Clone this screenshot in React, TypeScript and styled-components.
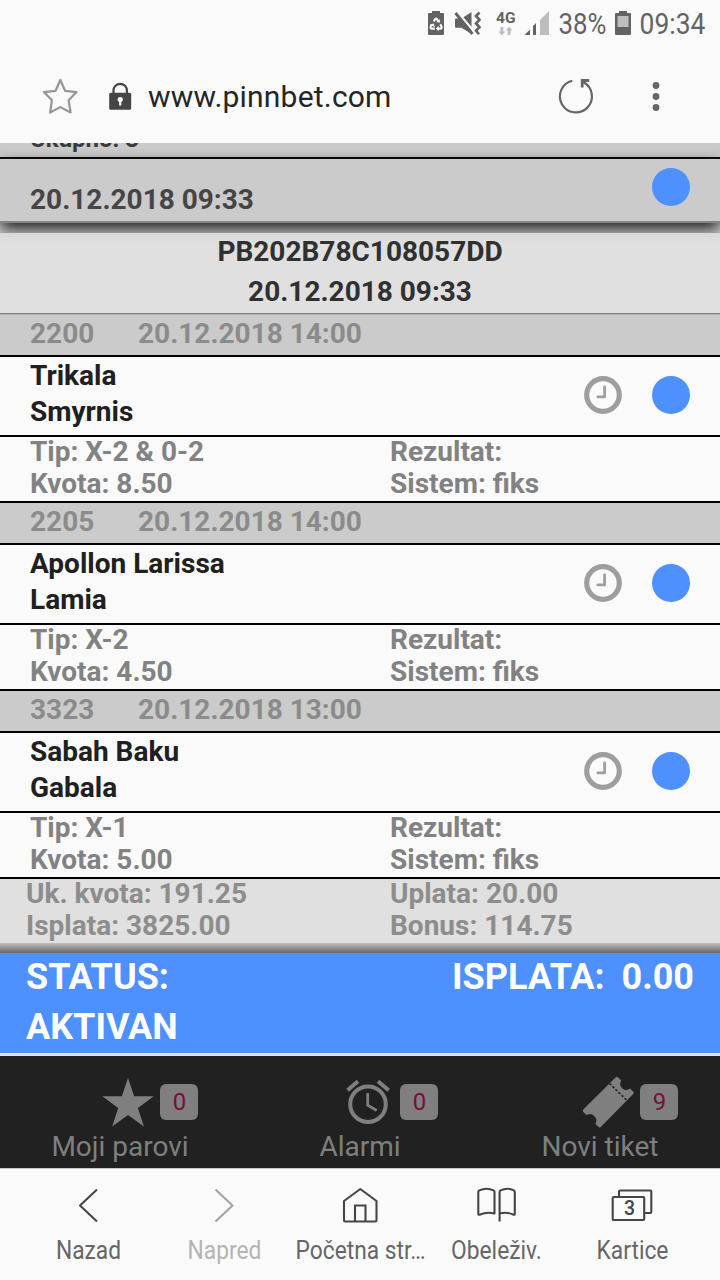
import React from "react";
import styled, { createGlobalStyle } from "styled-components";

const GlobalStyle = createGlobalStyle`
  * { box-sizing: border-box; }
  html, body { margin: 0; padding: 0; }
  body {
    width: 720px; height: 1280px; overflow: hidden; background: #fafafa;
    font-family: Roboto, "Liberation Sans", sans-serif; color: #212121;
  }
  svg { display: block; }
`;

const Screen = styled.div`
  width: 720px;
  height: 1280px;
  display: flex;
  flex-direction: column;
  overflow: hidden;
`;

const StatusBar = styled.header`
  height: 48px;
  flex: none;
  display: flex;
  align-items: flex-start;
  padding: 0 0 0 426px;
  color: #636363;
`;

const Condensed = styled.span<{ $scale: number; $w: number; $size: number; $lh: number }>`
  display: flex;
  justify-content: center;
  flex: none;
  width: ${(p) => p.$w}px;
  font-size: ${(p) => p.$size}px;
  line-height: ${(p) => p.$lh}px;
  white-space: nowrap;
  transform: scaleX(${(p) => p.$scale});
`;

const AddressBar = styled.div`
  height: 95px;
  flex: none;
  display: flex;
  align-items: center;
  padding: 0 36px 0 40px;
`;

const Url = styled.div`
  flex: 1;
  margin: 2px 0 0 16px;
  font-size: 30px;
  line-height: 40px;
  letter-spacing: 0.2px;
  color: #252525;
`;

const Page = styled.main`
  flex: none;
  height: 1025px;
  display: flex;
  flex-direction: column;
  background: #cbcbcb;
  overflow: hidden;
`;

const CountStrip = styled.div`
  flex: none;
  height: 14px;
  overflow: hidden;
  display: flex;
  align-items: flex-end;
  padding: 0 30px;
  font-weight: 700;
  font-size: 24px;
  line-height: 32px;
  color: #3a3a3a;
`;

const CountText = styled.span`
  margin-bottom: 2px;
`;

const TicketSummary = styled.section`
  flex: none;
  height: 66px;
  position: relative;
  display: flex;
  justify-content: space-between;
  padding: 9px 30px 0;
  border-top: 2px solid #0c0a0c;
  border-bottom: 2px solid #858585;
  background: #cbcbcb;
  box-shadow: 0 7px 14px -1px rgba(0, 0, 0, 0.85);
`;

const SummaryDate = styled.time`
  margin-top: 16px;
  font-weight: 700;
  font-size: 28px;
  line-height: 32px;
  color: #454545;
`;

const Dot = styled.div`
  flex: none;
  width: 38px;
  height: 38px;
  border-radius: 50%;
  background: #4d90fe;
`;

const TicketHead = styled.section`
  flex: none;
  position: relative;
  margin-top: 10px;
  height: 81px;
  border-bottom: 1px solid #7f7f7f;
  background: linear-gradient(#d9d9d9, #e0e0e0 10px);
  text-align: center;
  font-weight: 700;
  font-size: 28px;
  color: #303030;
`;

const TicketLine = styled.div`
  height: 40px;
  line-height: 38px;
`;

const MatchHeader = styled.div<{ $first?: boolean }>`
  flex: none;
  height: ${(p) => (p.$first ? 43 : 44)}px;
  display: flex;
  padding: 3px 30px 0;
  border-top: ${(p) => (p.$first ? "1px solid #b4b4b4" : "2px solid #000")};
  border-bottom: 2px solid #000;
  background: #cbcbcb;
  font-weight: 700;
  font-size: 28px;
  line-height: 32px;
  color: #8b8b8b;
`;

const MatchCode = styled.span`
  width: 108px;
`;

const Teams = styled.div`
  flex: none;
  height: 80px;
  display: flex;
  align-items: flex-start;
  padding: 0 30.4px 0 30px;
  border-bottom: 2px solid #000;
  background: #fafafa;
`;

const TeamNames = styled.div`
  flex: 1;
  padding-top: 1px;
  font-weight: 700;
  font-size: 28px;
  line-height: 36px;
  color: #202020;
`;

const Marks = styled.div`
  display: flex;
  gap: 30px;
  padding-top: 19px;
`;

const Details = styled.div<{ $total?: boolean }>`
  flex: none;
  height: 64px;
  display: grid;
  grid-template-columns: ${(p) => (p.$total ? 364 : 360)}px 1fr;
  grid-auto-rows: 32px;
  padding-left: ${(p) => (p.$total ? 26 : 30)}px;
  background: ${(p) => (p.$total ? "#e0e0e0" : "#fafafa")};
  font-weight: 700;
  font-size: 28px;
  line-height: 30px;
  color: ${(p) => (p.$total ? "#8d8d8d" : "#828282")};
`;

const Rule = styled.div`
  flex: none;
  height: 2px;
  background: #000;
`;

const BottomShade = styled.div`
  flex: none;
  height: 10px;
  background: linear-gradient(#bebebe, #666);
`;

const StatusPanel = styled.section`
  flex: none;
  height: 103px;
  display: flex;
  justify-content: space-between;
  padding: 0 26px;
  border-bottom: 3px solid #dde6f3;
  background: #4d90fe;
  color: #fff;
  font-weight: 700;
  font-size: 36px;
  line-height: 50px;
`;

const StatusLabel = styled.div`
  width: 200px;
  margin-top: -1px;
`;

const Payout = styled.div`
  display: flex;
  gap: 17px;
  margin-top: -1px;
`;

const SiteNav = styled.nav`
  flex: none;
  height: 112px;
  display: grid;
  grid-template-columns: repeat(3, 240px);
  background: #212121;
  color: #7f7f7f;
`;

const SiteTab = styled.div`
  display: flex;
  flex-direction: column;
  font-size: 28px;
  line-height: 32px;
  text-align: center;
`;

const TabTop = styled.div`
  height: 75px;
  display: flex;
  align-items: flex-start;
  padding: 18px 0 0 100px;
`;

const Count = styled.span`
  width: 38px;
  height: 36px;
  margin: 10px 0 0 4px;
  padding-left: 1px;
  border-radius: 6px;
  background: #7f7f7f;
  color: #7a0f35;
  font-size: 24px;
  line-height: 36px;
`;

const BrowserNav = styled.nav`
  flex: none;
  height: 112px;
  display: grid;
  grid-template-columns: repeat(5, 136px);
  padding: 0 20px;
  border-top: 1px solid #c8c8c8;
  background: #fafafa;
`;

const BrowserTab = styled.div<{ $off?: boolean }>`
  display: flex;
  flex-direction: column;
  align-items: center;
  padding-top: 12px;
  gap: 8px;
  color: ${(p) => (p.$off ? "#b4b4b4" : "#666")};
`;

const Clock = () => (
  <svg width="38" height="38" viewBox="0 0 38 38" fill="none" stroke="#9e9e9e">
    <circle cx="19" cy="19" r="16.3" strokeWidth="5.2" />
    <path d="M20.600 11v9.800h-6.800" strokeWidth="2.800" strokeLinecap="round" strokeLinejoin="round" />
  </svg>
);

const StatusIcons = () => (
  <svg width="128" height="48" viewBox="426 0 128 48" fill="#636363">
    <path d="M428 14q0-1 1-1h3v-2h8v2h3q1 0 1 1v20q0 1-1 1h-14q-1 0-1-1z" />
    <path d="M433.800 21.500l1.300-2.400q.900-1.200 1.800 0l1.300 2.400M440.300 24.300l1.300 2.400q.400 1.600-1 1.900h-3.200M434.800 28.600h-3.200q-1.400-.300-1-1.900l1.300-2.400" fill="none" stroke="#fafafa" strokeWidth="2.100" />
    <path d="M436.600 22.200l3.600.400-.600-3.600zM438.600 25.700v5.600l-2.600-2.800zM430.200 24.600l3.700-1 .900 3.600z" fill="#fafafa" />
    <path d="M455 19.500q0-1 1-1h5.500l10-6.500v22l-10-6.200h-5.500q-1 0-1-1z" />
    <path d="M457 11.500L474 31.500" stroke="#fafafa" strokeWidth="2.400" />
    <path d="M455.500 13L472.500 34" stroke="#636363" strokeWidth="2.800" />
    <path d="M479.500 12.500l-3.500 3.500 3.500 3.800-3.500 3.700 3.500 3.800-3.500 3.300 3 3.700" fill="none" stroke="#636363" strokeWidth="2.600" />
    <text x="496" y="23.200" fontSize="15.500" fontWeight="700" textLength="19.500" lengthAdjust="spacingAndGlyphs" fontFamily="Roboto, sans-serif">4G</text>
    <path d="M500.500 27h2.800v4.500h2l-3.400 3.800-3.400-3.800h2zM507.700 35h2.800v-4.500h2l-3.400-3.800-3.400 3.800h2z" fill="#bdbdbd" />
    <path d="M524.500 35l5.500-5.500v5.500zM533 35v-9l3-3v12z" />
    <path d="M540 35V20l9-9v24z" fill="#bdbdbd" />
  </svg>
);

const BatterySvg = styled.svg`
  flex: none;
  margin-left: 4px;
`;

const Battery = () => (
  <BatterySvg width="16" height="48" viewBox="0 0 16 48">
    <path d="M0 14q0-1 1-1h3v-2h8v2h3q1 0 1 1v20q0 1-1 1H1q-1 0-1-1z" fill="#636363" />
    <rect x="2.500" y="16" width="11" height="11" fill="#bdbdbd" />
  </BatterySvg>
);

const FavoriteStar = () => (
  <svg width="40" height="40" viewBox="0 0 40 40" fill="none" stroke="#969696" strokeWidth="2.200" strokeLinejoin="round">
    <path d="M20.300 4l4.800 10.800 11.500 1.300-8 8.200 2 12.200-10.300-5.400-10.200 5.400 1.800-12.200-8-8.200 11.700-1.300z" />
  </svg>
);

const LockSvg = styled.svg`
  flex: none;
  margin-left: 28px;
`;

const Lock = () => (
  <LockSvg width="24" height="40" viewBox="0 0 24 40">
    <path d="M5.500 19V14.500a6.700 6.700 0 0 1 13.400 0V19" fill="none" stroke="#454545" strokeWidth="2.200" />
    <rect x="1.200" y="16.800" width="22" height="17" rx="1.500" fill="#454545" />
    <path d="M12.200 21a2.600 2.600 0 0 1 1.100 5v3.500h-2.200V26a2.600 2.600 0 0 1 1.100-5z" fill="#fafafa" />
  </LockSvg>
);

const Reload = () => (
  <svg width="40" height="40" viewBox="556 76 40 40" fill="none" stroke="#666" strokeWidth="2.200">
    <path d="M572.300 80.800A16 16 0 1 0 583.500 82.300" />
    <path d="M582.200 87.500v-7h7" strokeWidth="2.800" />
    <path d="M582 80l4 4" />
  </svg>
);

const More = () => (
  <svg width="88" height="40" viewBox="596 76 88 40" fill="#666">
    <circle cx="656" cy="85.500" r="3.400" />
    <circle cx="656" cy="96.500" r="3.400" />
    <circle cx="656" cy="107.500" r="3.400" />
  </svg>
);

const StarSolid = () => (
  <svg width="56" height="56" viewBox="0 0 56 56" fill="#7f7f7f">
    <path d="M28 4l6.100 18.300h19.700L37.900 34l6 18.400L28 41.100 12.200 52.400l6-18.400L2.300 22.300h19.600z" />
  </svg>
);

const Alarm = () => (
  <svg width="56" height="56" viewBox="0 0 56 56" fill="none" stroke="#7f7f7f">
    <circle cx="28" cy="30.200" r="17.800" strokeWidth="4" />
    <path d="M27.700 19v12.200l9 5.300" strokeWidth="2.800" />
    <path d="M7.600 16.200L18 7.200M38 7.200l10.600 9" strokeWidth="4" />
  </svg>
);

const TicketIcon = () => (
  <svg width="56" height="56" viewBox="0 0 56 56">
    <path
      d="M35.500 3.500q1.300-1.300 2.600 0l3.200 3a5.500 5.500 0 0 0 .700 7.500 5.500 5.500 0 0 0 8 .500l3.200 3q1.300 1.300 0 2.600L21 52.800q-1.300 1.300-2.600 0l-3.200-3a6 6 0 0 0-1-7.800 6 6 0 0 0-7.700-.900l-3.200-3q-1.300-1.300 0-2.600z"
      fill="#7f7f7f"
    />
    <path d="M29.500 9.500L46.500 26" stroke="#212121" strokeWidth="1.600" strokeDasharray="2.400 1.800" />
  </svg>
);

const lineIcon = { fill: "none", stroke: "#454545", strokeWidth: 2.1, strokeLinejoin: "round" as const };

const Back = () => (
  <svg width="48" height="48" viewBox="0 0 48 48" {...lineIcon}>
    <path d="M33 8.500L16 24.500l17 16" />
  </svg>
);

const Forward = () => (
  <svg width="48" height="48" viewBox="0 0 48 48" {...lineIcon} stroke="#a2a2a2">
    <path d="M15.500 8.500l17 16-17 16" />
  </svg>
);

const Home = () => (
  <svg width="48" height="48" viewBox="0 0 48 48" {...lineIcon}>
    <path d="M8 20L24.300 8 40.500 20v19.500q0 1-1 1H9q-1 0-1-1z" />
    <path d="M19 40V24.500h10.500V40" strokeLinejoin="miter" />
  </svg>
);

const Book = () => (
  <svg width="48" height="48" viewBox="0 0 48 48" {...lineIcon}>
    <path d="M22.500 32.500q-7.500-2-15 1.200-1.200.300-1.200-1V11q0-1 1-1.600 7.400-3.300 14.200 0 1 .600 1 1.600zM27.600 40.500V11q0-1 1-1.600 6.800-3.300 13.200 0 1 .600 1 1.600v21.700q0 1.300-1.200 1-7-3.200-13.800-1.200" />
  </svg>
);

const Tabs = () => (
  <svg width="48" height="48" viewBox="0 0 48 48" {...lineIcon}>
    <rect x="4.700" y="16" width="31.500" height="23" rx="1" />
    <path d="M11 16v-5.500q0-1 1-1h30.300q1 0 1 1V31q0 1-1 1h-6" />
    <text x="21.500" y="34.300" textAnchor="middle" fontSize="19.500" fontWeight="500" fill="#454545" stroke="none">3</text>
  </svg>
);

const matches = [
  { code: "2200", time: "20.12.2018 14:00", home: "Trikala", away: "Smyrnis", tip: "X-2 & 0-2", odds: "8.50" },
  { code: "2205", time: "20.12.2018 14:00", home: "Apollon Larissa", away: "Lamia", tip: "X-2", odds: "4.50" },
  { code: "3323", time: "20.12.2018 13:00", home: "Sabah Baku", away: "Gabala", tip: "X-1", odds: "5.00" },
];

const siteTabs = [
  { label: "Moji parovi", count: 0, icon: <StarSolid /> },
  { label: "Alarmi", count: 0, icon: <Alarm /> },
  { label: "Novi tiket", count: 9, icon: <TicketIcon /> },
];

const browserTabs = [
  { label: "Nazad", icon: <Back /> },
  { label: "Napred", icon: <Forward />, off: true },
  { label: "Početna str…", icon: <Home /> },
  { label: "Obeleživ.", icon: <Book /> },
  { label: "Kartice", icon: <Tabs /> },
];

export default function App() {
  return (
    <Screen>
      <GlobalStyle />
      <StatusBar>
        <StatusIcons />
        <Condensed $scale={0.86} $w={57} $size={30} $lh={48}>38%</Condensed>
        <Battery />
        <Condensed $scale={0.88} $w={83} $size={30} $lh={48}>09:34</Condensed>
      </StatusBar>
      <AddressBar>
        <FavoriteStar />
        <Lock />
        <Url>www.pinnbet.com</Url>
        <Reload />
        <More />
      </AddressBar>
      <Page>
        <CountStrip>
          <CountText>Ukupno: 3</CountText>
        </CountStrip>
        <TicketSummary>
          <SummaryDate>20.12.2018 09:33</SummaryDate>
          <Dot />
        </TicketSummary>
        <TicketHead>
          <TicketLine>PB202B78C108057DD</TicketLine>
          <TicketLine>20.12.2018 09:33</TicketLine>
        </TicketHead>
        {matches.map((m, i) => (
          <React.Fragment key={m.code}>
            <MatchHeader $first={i === 0}>
              <MatchCode>{m.code}</MatchCode>
              <span>{m.time}</span>
            </MatchHeader>
            <Teams>
              <TeamNames>
                <div>{m.home}</div>
                <div>{m.away}</div>
              </TeamNames>
              <Marks>
                <Clock />
                <Dot />
              </Marks>
            </Teams>
            <Details>
              <span>Tip: {m.tip}</span>
              <span>Rezultat:</span>
              <span>Kvota: {m.odds}</span>
              <span>Sistem: fiks</span>
            </Details>
          </React.Fragment>
        ))}
        <Rule />
        <Details $total>
          <span>Uk. kvota: 191.25</span>
          <span>Uplata: 20.00</span>
          <span>Isplata: 3825.00</span>
          <span>Bonus: 114.75</span>
        </Details>
        <BottomShade />
        <StatusPanel>
          <StatusLabel>STATUS: AKTIVAN</StatusLabel>
          <Payout>
            <span>ISPLATA:</span>
            <span>0.00</span>
          </Payout>
        </StatusPanel>
        <SiteNav>
          {siteTabs.map((t) => (
            <SiteTab key={t.label}>
              <TabTop>
                {t.icon}
                <Count>{t.count}</Count>
              </TabTop>
              {t.label}
            </SiteTab>
          ))}
        </SiteNav>
      </Page>
      <BrowserNav>
        {browserTabs.map((t) => (
          <BrowserTab key={t.label} $off={t.off}>
            {t.icon}
            <Condensed $scale={0.875} $w={137} $size={26} $lh={26}>{t.label}</Condensed>
          </BrowserTab>
        ))}
      </BrowserNav>
    </Screen>
  );
}
